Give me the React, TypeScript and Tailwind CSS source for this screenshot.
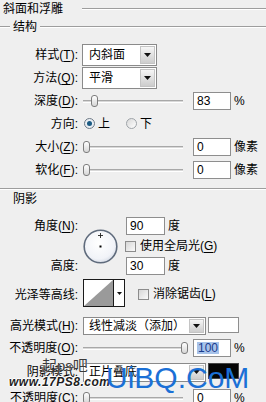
import React from "react";

function Tri() {
  return (
    <svg width="7" height="4" viewBox="0 0 7 4">
      <path d="M0 0H7L3.5 4Z" fill="#111" />
    </svg>
  );
}

function U({ c }: { c: string }) {
  return <span className="underline underline-offset-[2px]">{c}</span>;
}

function Label({ children }: { children: React.ReactNode }) {
  return <div className="w-[78px] shrink-0 text-right whitespace-nowrap">{children}</div>;
}

function Etched({ className = "" }: { className?: string }) {
  return <div className={"h-[2px] border-t border-[#9d9d9d] bg-white " + className} />;
}

function Input({ children, wide }: { children: React.ReactNode; wide?: boolean }) {
  return (
    <div
      className={
        (wide ? "w-[39px]" : "w-[38px]") +
        " h-[18px] shrink-0 border border-[#8e8e8e] bg-white flex items-center pl-[3px]"
      }
    >
      {children}
    </div>
  );
}

function Slider({ thumb }: { thumb: string }) {
  return (
    <div className="relative w-[100px] h-[14px] shrink-0">
      <div className="absolute left-0 right-0 top-[6px] h-[3px] border-t border-[#a8a8a8] bg-[#d8d8d8] border-b border-b-white" />
      <div
        className={
          "absolute top-[1px] w-[7px] h-[12px] rounded-[3px] border border-[#7d7d7d] bg-linear-to-b from-white to-[#d6d6d6] " +
          thumb
        }
      />
    </div>
  );
}

function Radio({ on }: { on?: boolean }) {
  if (on)
    return (
      <div className="w-[11px] h-[11px] rounded-full border border-[#6f7a86] bg-[#e9eef3] flex items-center justify-center shrink-0">
        <div className="w-[5px] h-[5px] rounded-full bg-[#1b5a82]" />
      </div>
    );
  return (
    <div className="w-[11px] h-[11px] rounded-full border border-[#9ea3a8] bg-linear-to-br from-[#d8d8d8] to-white shrink-0" />
  );
}

function Check() {
  return (
    <div className="w-[11px] h-[11px] border border-[#8c8c8c] bg-linear-to-br from-[#d6d6d6] to-[#fafafa] shrink-0" />
  );
}

function TopSelect({ text }: { text: string }) {
  return (
    <div className="flex h-[22px] w-[75px] border border-[#8a8a8a] bg-white shrink-0">
      <div className="flex-1 flex items-center pl-[6px]">{text}</div>
      <div className="w-[15px] my-px mr-px border border-[#c4c4c4] bg-linear-to-b from-[#f6f6f6] to-[#cdcdcd] flex items-center justify-center">
        <Tri />
      </div>
    </div>
  );
}

function LowSelect({ text, tall }: { text: string; tall?: boolean }) {
  return (
    <div
      className={
        (tall ? "h-[19px]" : "h-[18px]") +
        " flex w-[123px] border border-[#8a8a8a] bg-white shrink-0"
      }
    >
      <div className="flex-1 flex items-center pl-[5px] whitespace-nowrap overflow-hidden">{text}</div>
      <div className="w-[15px] my-px mr-px border border-[#c4c4c4] bg-linear-to-b from-[#f6f6f6] to-[#cdcdcd] flex items-center justify-center">
        <Tri />
      </div>
    </div>
  );
}

export default function App() {
  return (
    <div className="relative w-[266px] h-[402px] overflow-hidden bg-[#efefef] text-[12px] leading-none text-black font-['Liberation_Sans','Noto_Sans_CJK_SC',sans-serif]">
      {/* title */}
      <div className="flex items-center h-[18px]">
        <div className="w-[82px] pl-[3px] shrink-0">斜面和浮雕</div>
        <Etched className="flex-1" />
      </div>
      {/* 结构 group */}
      <div className="flex items-center h-[18px]">
        <Etched className="w-[10px]" />
        <div className="ml-[3px] mr-[3px]">结构</div>
        <Etched className="flex-1" />
      </div>
      <div className="h-[8px]" />

      <div className="flex items-start h-[23px]">
        <div className="flex items-center h-[22px]">
          <Label>
            样式(<U c="T" />):
          </Label>
          <div className="ml-[4px]">
            <TopSelect text="内斜面" />
          </div>
        </div>
      </div>
      <div className="flex items-start h-[22px]">
        <div className="flex items-center h-[22px]">
          <Label>
            方法(<U c="Q" />):
          </Label>
          <div className="ml-[4px]">
            <TopSelect text="平滑" />
          </div>
        </div>
      </div>

      <div className="flex items-center h-[23px]">
        <Label>
          深度(<U c="D" />):
        </Label>
        <div className="ml-[5px]">
          <Slider thumb="left-[8px]" />
        </div>
        <div className="ml-[10px]">
          <Input>83</Input>
        </div>
        <div className="ml-[3px]">%</div>
      </div>

      <div className="flex items-center h-[23px]">
        <Label>方向:</Label>
        <div className="ml-[6px]">
          <Radio on />
        </div>
        <div className="ml-[3px] w-[12px]">上</div>
        <div className="ml-[16px]">
          <Radio />
        </div>
        <div className="ml-[3px]">下</div>
      </div>

      <div className="flex items-center h-[23px]">
        <Label>
          大小(<U c="Z" />):
        </Label>
        <div className="ml-[5px]">
          <Slider thumb="left-0" />
        </div>
        <div className="ml-[10px]">
          <Input>0</Input>
        </div>
        <div className="ml-[3px]">像素</div>
      </div>

      <div className="flex items-center h-[23px]">
        <Label>
          软化(<U c="F" />):
        </Label>
        <div className="ml-[5px]">
          <Slider thumb="left-0" />
        </div>
        <div className="ml-[10px]">
          <Input>0</Input>
        </div>
        <div className="ml-[3px]">像素</div>
      </div>

      <div className="h-[7px]" />
      <Etched />

      <div className="flex items-center h-[18px] pl-[13px]">阴影</div>
      <div className="h-[9px]" />

      {/* angle block */}
      <div className="flex h-[58px]">
        <div className="w-[78px] shrink-0 flex flex-col justify-between">
          <div className="h-[18px] flex items-center justify-end whitespace-nowrap">
            角度(<U c="N" />):
          </div>
          <div className="h-[18px] flex items-center justify-end">高度:</div>
        </div>
        <div className="w-[48px] shrink-0 pl-[5px] pt-[12px]">
          <svg width="35" height="35" viewBox="0 0 35 35">
            <defs>
              <radialGradient id="ag" cx="45%" cy="40%" r="60%">
                <stop offset="0%" stopColor="#ffffff" />
                <stop offset="80%" stopColor="#f1f3f8" />
                <stop offset="100%" stopColor="#d9dee8" />
              </radialGradient>
            </defs>
            <circle cx="17.5" cy="17.5" r="16.3" fill="url(#ag)" stroke="#5f6b7c" strokeWidth="1.6" />
            <path d="M17.5 4V9M15 6.5H20" stroke="#222" strokeWidth="0.9" />
            <rect x="16.5" y="16.5" width="2" height="2" fill="#000" />
          </svg>
        </div>
        <div className="flex flex-col">
          <div className="h-[18px] flex items-center">
            <Input wide>90</Input>
            <div className="ml-[3px]">度</div>
          </div>
          <div className="h-[22px] flex items-center -ml-[1px]">
            <Check />
            <div className="ml-[4px] whitespace-nowrap">
              使用全局光(<U c="G" />)
            </div>
          </div>
          <div className="h-[18px] flex items-center">
            <Input wide>30</Input>
            <div className="ml-[3px]">度</div>
          </div>
        </div>
      </div>

      <div className="h-[4px]" />
      <div className="flex items-center h-[28px]">
        <Label>
          <span className="relative top-[2px]">光泽等高线:</span>
        </Label>
        <div className="ml-[5px] flex h-[28px] border border-[#1a1a1a] bg-white">
          <svg width="29" height="26" viewBox="0 0 29 26" className="block">
            <polygon points="0,26 29,0 29,26" fill="#9a9a9a" />
          </svg>
          <div className="w-[11px] border-l border-[#1a1a1a] flex items-center justify-center">
            <svg width="5" height="3" viewBox="0 0 5 3">
              <path d="M0 0H5L2.5 3Z" fill="#111" />
            </svg>
          </div>
        </div>
        <div className="ml-[13px] relative top-[1px]">
          <Check />
        </div>
        <div className="ml-[4px] whitespace-nowrap relative top-[1px]">
          消除锯齿(<U c="L" />)
        </div>
      </div>

      <div className="h-[9px]" />
      <div className="flex items-center h-[20px]">
        <Label>
          高光模式(<U c="H" />):
        </Label>
        <div className="ml-[5px]">
          <LowSelect text="线性减淡（添加）" />
        </div>
        <div className="ml-[2px] w-[31px] h-[16px] border border-[#8e8e8e] bg-white self-start mt-[1px]" />
      </div>

      <div className="flex items-center h-[24px]">
        <Label>
          不透明度(<U c="O" />):
        </Label>
        <div className="ml-[5px]">
          <Slider thumb="left-[98px]" />
        </div>
        <div className="ml-[10px]">
          <Input>
            <span className="bg-[#a7c3ea] text-[#1a3b8c] px-px">100</span>
          </Input>
        </div>
        <div className="ml-[3px]">%</div>
      </div>

      <div className="flex items-center h-[24px]">
        <Label>阴影模式:</Label>
        <div className="ml-[5px]">
          <LowSelect text="正片叠底" tall />
        </div>
        <div className="ml-[2px] w-[31px] h-[16px] border border-[#444] bg-[#050505] self-start mt-[3px]" />
      </div>

      <div className="flex items-center h-[28px]">
        <Label>
          不透明度(<U c="C" />):
        </Label>
        <div className="ml-[5px]">
          <Slider thumb="left-0" />
        </div>
        <div className="ml-[10px]">
          <Input>0</Input>
        </div>
        <div className="ml-[3px]">%</div>
      </div>

      {/* watermarks */}
      <div className="absolute left-[42px] top-[358px] text-[15px] text-[#3b3b3b] leading-none [text-shadow:0_0_1px_#fff]">
        起ps吧
      </div>
      <div className="absolute left-[9px] top-[376px] text-[12px] font-bold italic tracking-[0.5px] text-[#1e1e1e] leading-none [text-shadow:1px_0_0_#fff,-1px_0_0_#fff,0_1px_0_#fff,0_-1px_0_#fff]">
        www.17PS8.com
      </div>
      <div className="absolute left-[106px] top-[363px] text-[30px] leading-none text-[#1b70d6] font-['Liberation_Sans',sans-serif]">
        UiBQ.CoM
      </div>
    </div>
  );
}
